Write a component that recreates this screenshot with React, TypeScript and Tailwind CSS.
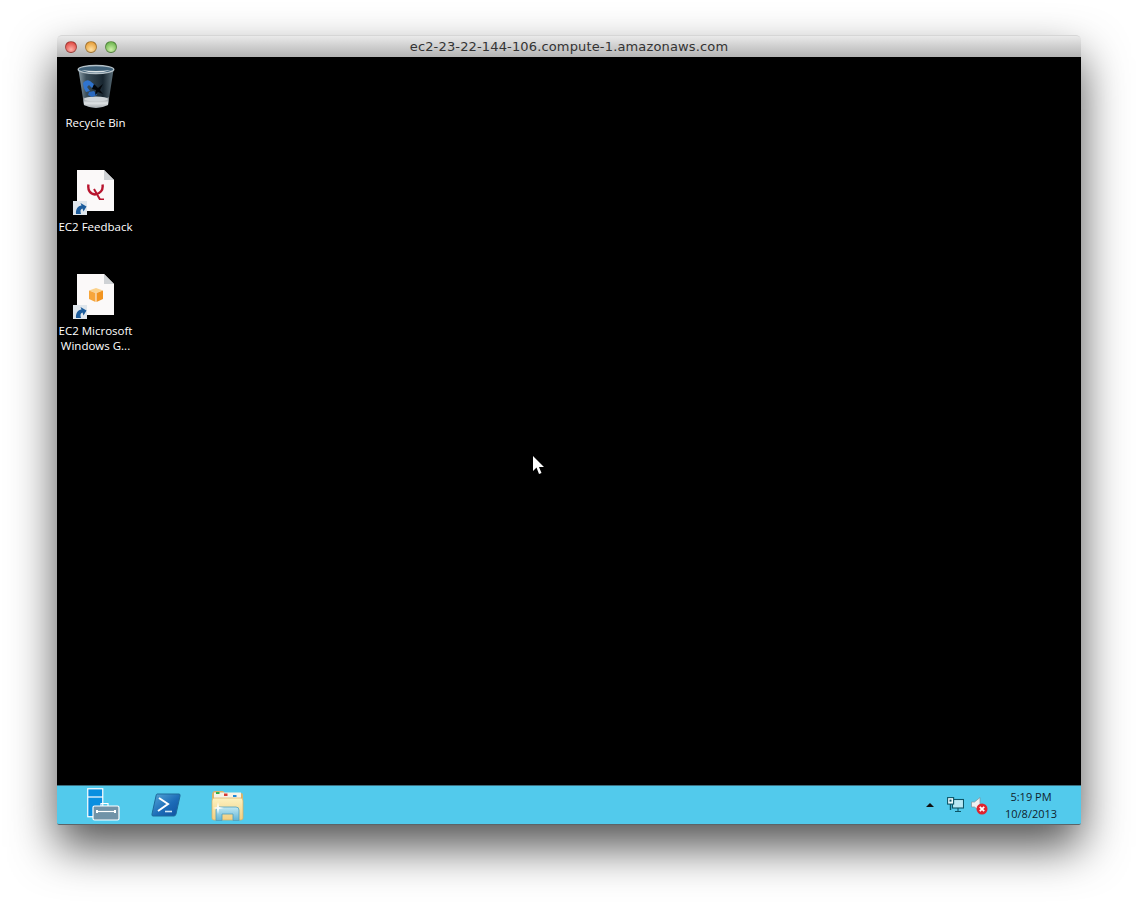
const labelFont = "font-['Open_Sans','Noto_Sans',sans-serif]";

function RecycleBin() {
  return (
    <svg width="38" height="46" viewBox="0 0 38 46">
      <defs>
        <linearGradient id="binBody" x1="0" y1="0" x2="1" y2="0">
          <stop offset="0" stopColor="#8a9ca6" />
          <stop offset="0.22" stopColor="#3c4f5b" />
          <stop offset="0.7" stopColor="#182630" />
          <stop offset="1" stopColor="#5d707b" />
        </linearGradient>
        <linearGradient id="binBase" x1="0" y1="0" x2="0" y2="1">
          <stop offset="0" stopColor="#70787d" />
          <stop offset="0.55" stopColor="#dfe3e5" />
          <stop offset="1" stopColor="#a3a9ac" />
        </linearGradient>
      </defs>
      <path d="M1.5 6 L7 41 Q19 47 31 41 L36.5 6 Z" fill="url(#binBody)" />
      <path d="M6 33 Q19 40 32 33 L31 41 Q19 47 7 41 Z" fill="url(#binBase)" />
      <ellipse cx="19" cy="35" rx="12" ry="2.6" fill="#cfd5d8" />
      <ellipse cx="19" cy="5.5" rx="17.8" ry="4" fill="#3f6077" stroke="#b5c1c8" strokeWidth="1.4" />
      <path d="M4 6 Q19 11 34 6 Q19 8 4 6 Z" fill="#dce3e6" />
      <path d="M6 19 Q9 15 13 17 L18 21 L15 24 L12 21 L10 23 L13 27 L9 28 Q6 24 6 19 Z" fill="#2f74cf" />
      <path d="M12 28 L17 27 L20 31 L15 33 L11 31 Z" fill="#2a69bf" />
      <path d="M17 20 L21 24 L26 20 L23 26 L26 30 L21 28 L18 31 L19 26 L15 25 Z" fill="#03060a" />
    </svg>
  );
}

function ShortcutBadge() {
  return (
    <div className="absolute left-[-4px] bottom-[-4px] w-[14px] h-[14px] bg-[#dfe6ec] flex items-center justify-center">
      <svg width="13" height="13" viewBox="0 0 13 13">
        <path d="M2 12 C1.5 7 4 4 7.5 3.5 L6.5 1 L12.5 4.5 L9.5 9.5 L8.5 6.5 C6.5 7 6 9 7 12 Z" fill="#1c5c9c" />
      </svg>
    </div>
  );
}

function DocIcon({ children }: { children: React.ReactNode }) {
  return (
    <div className="relative w-[37px] h-[41px]">
      <svg width="37" height="41" viewBox="0 0 37 41" className="absolute left-0 top-0">
        <path d="M0 0 H27 L37 10 V41 H0 Z" fill="#fbf9f9" />
        <path d="M27 0 V10 H37 Z" fill="#cfd2d5" />
      </svg>
      <div className="absolute inset-0 flex items-center justify-center">{children}</div>
      <ShortcutBadge />
    </div>
  );
}

function DesktopIcon({ icon, label, gap }: { icon: React.ReactNode; label: string[]; gap: string }) {
  return (
    <div className="w-[77px] flex flex-col items-center">
      {icon}
      <div className={`${gap} text-white text-[11.5px] leading-[15px] text-center whitespace-nowrap ${labelFont}`}>
        {label.map((l) => (
          <div key={l}>{l}</div>
        ))}
      </div>
    </div>
  );
}

function ServerManager() {
  return (
    <svg width="33" height="34" viewBox="0 0 33 34">
      <rect x="0.75" y="0.75" width="15" height="28" fill="#0a8fe0" stroke="#fff" strokeWidth="1.2" />
      <path d="M1 9 H16" stroke="#fff" strokeWidth="1.2" />
      <path d="M14 18 V15.5 H21 V18" fill="none" stroke="#fff" strokeWidth="1.2" />
      <rect x="6" y="18" width="26" height="14" rx="1.5" fill="#7193a8" stroke="#fff" strokeWidth="1.2" />
      <path d="M10 23.5 H28" stroke="#fff" strokeWidth="1.2" />
      <rect x="9" y="22" width="2" height="3" fill="#fff" />
      <rect x="27" y="22" width="2" height="3" fill="#fff" />
    </svg>
  );
}

function PowerShell() {
  return (
    <svg width="30" height="24" viewBox="0 0 30 24">
      <defs>
        <linearGradient id="psFill" x1="0" y1="0" x2="1" y2="1">
          <stop offset="0" stopColor="#58a9d8" />
          <stop offset="0.55" stopColor="#1c6cb8" />
          <stop offset="1" stopColor="#0f4f9e" />
        </linearGradient>
      </defs>
      <path d="M6 1 H28 Q29.5 1 29 3 L25 21 Q24.5 23 23 23 H2 Q0.5 23 1 21 L5 3 Q5.3 1 6 1 Z" fill="url(#psFill)" stroke="#1d6a9c" strokeWidth="1" />
      <path d="M8 5 L17 11 L7 18" fill="none" stroke="#fff" strokeWidth="2" />
      <path d="M14 18.5 H21" stroke="#cfe6f5" strokeWidth="1.6" />
    </svg>
  );
}

function Explorer() {
  return (
    <svg width="33" height="31" viewBox="0 0 33 31">
      <defs>
        <linearGradient id="folder" x1="0" y1="0" x2="0" y2="1">
          <stop offset="0" stopColor="#fdf2c0" />
          <stop offset="1" stopColor="#f2cf82" />
        </linearGradient>
        <linearGradient id="folderGlass" x1="0" y1="0" x2="0" y2="1">
          <stop offset="0" stopColor="#c0e8f2" />
          <stop offset="1" stopColor="#5fb4d6" />
        </linearGradient>
      </defs>
      <path d="M1 5 Q1 1 4 1 H12 L14 3 H30 Q32 3 32 5 V29 H1 Z" fill="#d9b36b" />
      <rect x="3" y="2.5" width="27" height="6" fill="#f6f3e6" />
      <rect x="5" y="2" width="3.5" height="2" fill="#30b04a" />
      <rect x="13" y="3.5" width="3.5" height="2.5" fill="#d63c34" />
      <rect x="22" y="5" width="3.5" height="2" fill="#1f8ad8" />
      <path d="M1 11 Q1 8 3 8 H30 Q32 8 32 11 V28 Q32 30 30 30 H3 Q1 30 1 28 Z" fill="url(#folder)" stroke="#d6ad62" strokeWidth="0.7" />
      <path d="M5 30.5 V20 Q5 17 8 17 H25 Q28 17 28 20 V30.5 H22 V24 H11 V30.5 Z" fill="url(#folderGlass)" stroke="#4f9fbe" strokeWidth="0.8" />
      <path d="M7 12 L8 17 L13 18 L8 19 L7 24 L6 19 L2 18 L6 17 Z" fill="#fff" opacity="0.9" />
    </svg>
  );
}

function NetworkTray() {
  return (
    <svg width="17" height="16" viewBox="0 0 17 16" fill="none" stroke="#0c5566" strokeWidth="1.1">
      <rect x="5.5" y="2.5" width="11" height="8.5" fill="#b8e8f4" />
      <path d="M8 14.5 H14 M11 11 V14.5" />
      <rect x="0.6" y="0.6" width="6" height="6.5" fill="#eefafd" />
      <path d="M3.5 7 V13" strokeWidth="1.4" />
      <rect x="2.5" y="2.6" width="2" height="2" fill="#0c5566" stroke="none" />
    </svg>
  );
}

function VolumeTray() {
  return (
    <svg width="17" height="18" viewBox="0 0 17 18">
      <path d="M0.5 5 H3.5 L9 0.5 V14.5 L3.5 10 H0.5 Z" fill="#eef0f1" stroke="#7f9098" strokeWidth="0.7" />
      <circle cx="11" cy="12" r="5.5" fill="#e0242f" />
      <path d="M8.8 9.8 L13.2 14.2 M13.2 9.8 L8.8 14.2" stroke="#fff" strokeWidth="1.8" />
    </svg>
  );
}

function TrafficLight({ color }: { color: string }) {
  return <div className={`w-[12px] h-[12px] rounded-full border border-black/30 ${color}`} />;
}

export default function App() {
  return (
    <div className="w-[1138px] h-[904px] bg-white overflow-hidden pl-[57px] pt-[35px]">
      <div className="relative w-[1024px] h-[790px] flex flex-col rounded-t-[5px] rounded-b-[2px] shadow-[0_22px_46px_rgba(0,0,0,0.68)]">
        {/* Title bar */}
        <div className="relative h-[22px] shrink-0 flex items-center rounded-t-[5px] border-t border-[#d6d6d6] bg-gradient-to-b from-[#eaeaea] to-[#b4b4b4]">
          <div className="flex gap-[8px] pl-[8px]">
            <TrafficLight color="bg-[radial-gradient(circle_at_50%_75%,#ffb0a8,#d8322c)]" />
            <TrafficLight color="bg-[radial-gradient(circle_at_50%_75%,#ffe0a0,#e08f22)]" />
            <TrafficLight color="bg-[radial-gradient(circle_at_50%_75%,#cdf0a8,#57a83a)]" />
          </div>
          <div className="absolute inset-0 flex items-center justify-center text-[13px] text-[#333] tracking-[0.15px] font-['DejaVu_Sans',sans-serif]">
            ec2-23-22-144-106.compute-1.amazonaws.com
          </div>
        </div>

        {/* Remote desktop */}
        <div className="relative flex-1 bg-black">
          <div className="flex flex-col gap-[40px] pt-[7px]">
            <DesktopIcon icon={<RecycleBin />} gap="mt-[5px]" label={["Recycle Bin"]} />
            <DesktopIcon
              gap="mt-[8px]"
              icon={
                <DocIcon>
                  <svg width="18" height="16" viewBox="0 0 18 16" fill="none" stroke="#b8152f" strokeWidth="2.4" className="mt-[2px]">
                    <path d="M1.5 0.5 C0.5 6 3 10 8 10.5 C13 10 16.5 6 15.5 0.5" />
                    <path d="M7 5 L13 15.5 H17" strokeWidth="2" />
                  </svg>
                </DocIcon>
              }
              label={["EC2 Feedback"]}
            />
            <DesktopIcon
              gap="mt-[8px]"
              icon={
                <DocIcon>
                  <svg width="16" height="16" viewBox="0 0 16 16">
                    <path d="M1 3.5 L8 1 L15 3.5 L8 6 Z" fill="#fbd28c" />
                    <path d="M1 3.5 V12 L7.5 15 V6 Z" fill="#f7a63b" />
                    <path d="M15 3.5 V12 L8.5 15 V6 Z" fill="#f2941f" />
                  </svg>
                </DocIcon>
              }
              label={["EC2 Microsoft", "Windows G..."]}
            />
          </div>

          {/* Cursor */}
          <svg width="11" height="20" viewBox="0 0 11 20" className="absolute left-[476px] top-[399px]">
            <path d="M0 0 V15 L3.5 11.5 L6 18 L8.5 17 L6 11 H11 Z" fill="#fff" />
          </svg>
        </div>

        {/* Taskbar */}
        <div className="h-[40px] shrink-0 flex items-center bg-[#52caec] border-t border-[#3c6f80] border-b border-b-[#5c6468] rounded-b-[2px]">
          <div className="flex items-center pl-[30px]">
            <ServerManager />
            <div className="ml-[31px]"><PowerShell /></div>
            <div className="ml-[30px]"><Explorer /></div>
          </div>
          <div className="ml-auto flex items-center pr-[24px]">
            <div className="w-0 h-0 border-x-[4px] border-x-transparent border-b-[4px] border-b-[#111]" />
            <div className="ml-[13px]"><NetworkTray /></div>
            <div className="ml-[7px] mt-[2px]"><VolumeTray /></div>
            <div className={`ml-[17px] w-[52px] text-center text-[11px] leading-[17px] text-[#10222c] whitespace-nowrap ${labelFont}`}>
              <div>5:19 PM</div>
              <div>10/8/2013</div>
            </div>
          </div>
        </div>
      </div>
    </div>
  );
}
